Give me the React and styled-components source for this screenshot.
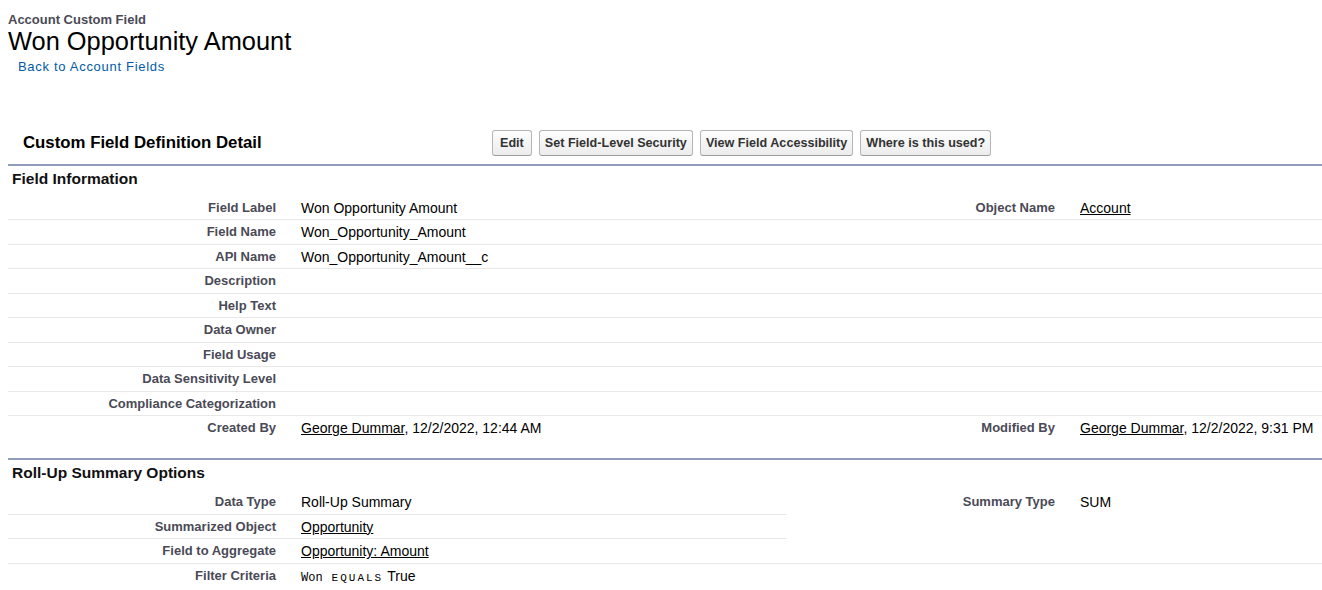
import React from "react";
import styled, { createGlobalStyle } from "styled-components";

const GlobalStyle = createGlobalStyle`
  html, body {
    margin: 0;
    background: #fff;
  }

  body {
    font-family: Arial, "Liberation Sans", Helvetica, sans-serif;
    color: #000;
    overflow: hidden;
  }
`;

const Page = styled.div`
  padding-left: 8px;
`;

const Kicker = styled.div`
  padding-top: 12px;
  font-size: 13px;
  line-height: 15px;
  font-weight: bold;
  color: #4a4a56;
`;

const PageTitle = styled.h1`
  margin: 0;
  font-size: 25.4px;
  line-height: 29px;
  font-weight: normal;
  color: #000;
`;

const BackLink = styled.a`
  display: inline-block;
  margin: 3px 0 0 10px;
  font-size: 13px;
  line-height: 15px;
  letter-spacing: 0.7px;
  color: #015ba7;
  text-decoration: none;
`;

const BlockHeader = styled.div`
  display: flex;
  align-items: center;
  margin-top: 55px;
  padding-bottom: 8px;
`;

const BlockTitle = styled.h2`
  width: 484px;
  box-sizing: border-box;
  margin: 0;
  padding-left: 15px;
  font-size: 16.8px;
  font-weight: bold;
  color: #000;
`;

const ButtonBar = styled.div`
  display: flex;
  gap: 7px;
`;

const Button = styled.button`
  height: 26px;
  padding: 0 ${(p) => (p.$wide ? 7 : 5)}px;
  font-family: inherit;
  font-size: 12.6px;
  font-weight: bold;
  color: #333;
  background: linear-gradient(#fdfdfd, #ececec);
  border: 1px solid #b5b5b5;
  border-bottom-color: #9c9c9c;
  border-radius: 3px;
`;

const Section = styled.section`
  border-top: 2px solid #8e9dbe;
  margin-bottom: ${(p) => p.$gap || 0}px;
`;

const SectionTitle = styled.h3`
  margin: 0;
  padding: 0 0 4px 4px;
  font-size: 15.5px;
  line-height: 26px;
  font-weight: bold;
  color: #111;
`;

const DetailGrid = styled.div`
  display: grid;
  grid-template-columns: 280px 499px 280px 1fr;
  grid-auto-rows: 24.44px;
`;

const Cell = styled.div`
  box-sizing: border-box;
  grid-row: span ${(p) => p.$span || 1};
  border-bottom: ${(p) => (p.$last ? "none" : "1px solid #e8e8e8")};
  line-height: 24px;
  white-space: nowrap;
`;

const Label = styled(Cell)`
  padding-right: 12px;
  text-align: right;
  font-size: 13px;
  font-weight: bold;
  color: #4a4a56;
`;

const Data = styled(Cell)`
  padding-left: 13px;
  font-size: 14px;
  color: #000;
`;

const RecordLink = styled.a`
  color: #000;
  text-decoration: underline;
`;

const Code = styled.span`
  font-family: "Courier New", "Liberation Mono", monospace;
  font-size: 12px;
`;

const Operator = styled.span`
  margin: 0 4px 0 9px;
  font-family: "Courier New", "Liberation Mono", monospace;
  font-size: 11px;
  letter-spacing: 2px;
`;

const fieldRows = [
  ["Field Label", "Won Opportunity Amount", "Object Name", <RecordLink href="#">Account</RecordLink>],
  ["Field Name", "Won_Opportunity_Amount"],
  ["API Name", "Won_Opportunity_Amount__c"],
  ["Description"],
  ["Help Text"],
  ["Data Owner"],
  ["Field Usage"],
  ["Data Sensitivity Level"],
  ["Compliance Categorization"],
  [
    "Created By",
    <>
      <RecordLink href="#">George Dummar</RecordLink>, 12/2/2022, 12:44 AM
    </>,
    "Modified By",
    <>
      <RecordLink href="#">George Dummar</RecordLink>, 12/2/2022, 9:31 PM
    </>,
  ],
];

function FieldInformation() {
  return (
    <Section $gap={18}>
      <SectionTitle>Field Information</SectionTitle>
      <DetailGrid>
        {fieldRows.map(([label, value, label2, value2], i) => {
          const last = i === fieldRows.length - 1;
          return (
            <React.Fragment key={i}>
              <Label $last={last}>{label}</Label>
              <Data $last={last}>{value}</Data>
              <Label $last={last}>{label2}</Label>
              <Data $last={last}>{value2}</Data>
            </React.Fragment>
          );
        })}
      </DetailGrid>
    </Section>
  );
}

function RollUpOptions() {
  return (
    <Section>
      <SectionTitle>Roll-Up Summary Options</SectionTitle>
      <DetailGrid>
        <Label>Data Type</Label>
        <Data>Roll-Up Summary</Data>
        <Label $span={3}>Summary Type</Label>
        <Data $span={3}>SUM</Data>

        <Label>Summarized Object</Label>
        <Data>
          <RecordLink href="#">Opportunity</RecordLink>
        </Data>

        <Label>Field to Aggregate</Label>
        <Data>
          <RecordLink href="#">Opportunity: Amount</RecordLink>
        </Data>

        <Label $last>Filter Criteria</Label>
        <Data $last>
          <Code>Won</Code>
          <Operator>EQUALS</Operator>True
        </Data>
        <Label $last />
        <Data $last />
      </DetailGrid>
    </Section>
  );
}

export default function App() {
  return (
    <Page>
      <GlobalStyle />
      <Kicker>Account Custom Field</Kicker>
      <PageTitle>Won Opportunity Amount</PageTitle>
      <BackLink href="#">Back to Account Fields</BackLink>
      <BlockHeader>
        <BlockTitle>Custom Field Definition Detail</BlockTitle>
        <ButtonBar>
          <Button $wide>Edit</Button>
          <Button>Set Field-Level Security</Button>
          <Button>View Field Accessibility</Button>
          <Button>Where is this used?</Button>
        </ButtonBar>
      </BlockHeader>
      <FieldInformation />
      <RollUpOptions />
    </Page>
  );
}
